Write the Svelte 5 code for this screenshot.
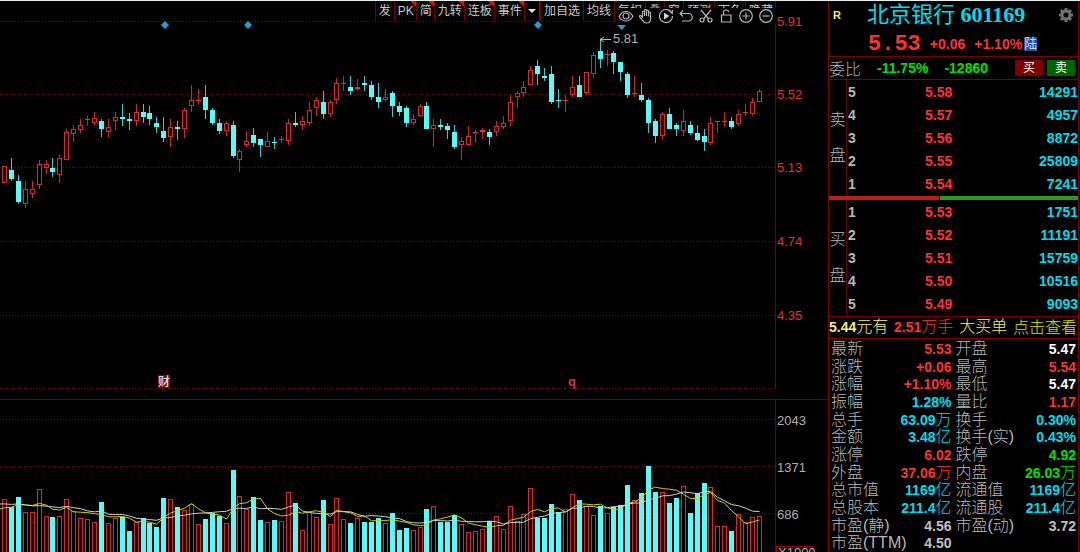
<script lang="ts">
  // up/down, high, body top, body bottom, low, volume top
  type Bar = [string, number, number, number, number, number];

  const bars: Bar[] = [
    ['u', 166, 166, 183, 183, 499], ['d', 158, 170, 179, 181, 507], ['d', 175, 181, 202, 204, 497],
    ['u', 181, 189, 204, 208, 512], ['u', 181, 189, 194, 198, 512], ['u', 160, 164, 185, 189, 489],
    ['u', 160, 164, 168, 174, 516], ['d', 158, 168, 172, 177, 517], ['u', 155, 158, 175, 183, 516],
    ['u', 129, 132, 160, 160, 499], ['u', 125, 129, 134, 142, 511], ['u', 119, 125, 130, 133, 518],
    ['u', 116, 119, 120, 126, 519], ['u', 112, 118, 123, 125, 522], ['d', 119, 121, 129, 137, 502],
    ['u', 119, 127, 132, 137, 523], ['u', 112, 117, 121, 130, 518], ['d', 104, 117, 119, 126, 517],
    ['d', 113, 119, 121, 130, 531], ['u', 104, 112, 121, 126, 522], ['d', 104, 112, 117, 123, 518],
    ['d', 106, 113, 119, 125, 523], ['d', 117, 123, 127, 133, 527], ['d', 117, 131, 138, 142, 498],
    ['u', 119, 127, 137, 147, 499], ['d', 121, 127, 129, 140, 507], ['u', 108, 110, 129, 138, 510],
    ['u', 85, 100, 106, 112, 504], ['u', 89, 100, 101, 104, 524], ['d', 85, 97, 110, 119, 519],
    ['d', 108, 110, 123, 125, 513], ['d', 119, 123, 131, 134, 516], ['u', 121, 123, 131, 136, 523],
    ['d', 121, 125, 156, 158, 470], ['u', 149, 151, 160, 172, 496], ['u', 131, 141, 145, 147, 509],
    ['d', 128, 135, 143, 147, 497], ['d', 139, 139, 145, 157, 520], ['u', 132, 141, 147, 147, 522],
    ['d', 137, 142, 143, 149, 520], ['u', 136, 139, 140, 143, 521], ['u', 119, 123, 141, 145, 492],
    ['d', 112, 123, 125, 127, 503], ['u', 116, 121, 125, 130, 530], ['u', 102, 110, 123, 125, 512],
    ['u', 97, 100, 108, 116, 517], ['d', 91, 102, 114, 119, 500], ['u', 100, 102, 114, 117, 524],
    ['u', 78, 83, 100, 104, 498], ['u', 76, 83, 84, 91, 519], ['d', 76, 87, 91, 95, 523],
    ['u', 79, 87, 89, 91, 518], ['d', 76, 83, 85, 91, 522], ['d', 81, 85, 97, 100, 522],
    ['d', 83, 97, 102, 108, 518], ['u', 89, 97, 100, 102, 523], ['d', 91, 93, 106, 117, 513],
    ['d', 102, 106, 112, 116, 530], ['d', 106, 108, 123, 127, 528], ['u', 114, 119, 123, 125, 530],
    ['u', 104, 106, 116, 117, 527], ['d', 102, 106, 129, 129, 509], ['u', 119, 125, 129, 147, 506],
    ['d', 119, 125, 127, 130, 522], ['d', 123, 126, 130, 139, 522], ['d', 125, 132, 147, 149, 515],
    ['u', 137, 141, 145, 160, 524], ['u', 126, 136, 145, 145, 532], ['u', 130, 132, 133, 143, 531],
    ['u', 128, 130, 132, 139, 529], ['d', 129, 132, 137, 145, 521], ['u', 121, 126, 132, 136, 516],
    ['u', 116, 123, 127, 129, 529], ['u', 95, 102, 121, 126, 506], ['u', 91, 93, 97, 108, 521],
    ['u', 81, 87, 93, 97, 514], ['u', 66, 70, 85, 85, 488], ['d', 60, 66, 74, 85, 518],
    ['d', 68, 76, 78, 81, 518], ['d', 66, 74, 102, 104, 504], ['d', 89, 100, 101, 108, 512],
    ['u', 95, 100, 101, 112, 509], ['u', 76, 87, 95, 97, 494], ['d', 76, 85, 97, 97, 500],
    ['u', 72, 72, 93, 95, 506], ['u', 52, 55, 74, 78, 515], ['d', 39, 51, 59, 68, 506],
    ['u', 50, 54, 55, 66, 513], ['d', 51, 53, 62, 74, 507], ['d', 62, 62, 72, 81, 505],
    ['d', 72, 74, 95, 98, 485], ['u', 76, 93, 94, 97, 500], ['d', 83, 95, 100, 102, 493],
    ['d', 98, 100, 123, 133, 466], ['d', 119, 121, 136, 143, 492], ['u', 112, 114, 136, 140, 492],
    ['d', 108, 114, 129, 129, 503], ['d', 123, 125, 129, 136, 498], ['u', 110, 121, 131, 136, 486],
    ['d', 121, 125, 133, 135, 513], ['d', 125, 133, 140, 141, 493], ['d', 129, 136, 142, 151, 483],
    ['u', 117, 123, 143, 145, 487], ['u', 121, 121, 122, 133, 526], ['u', 112, 121, 122, 127, 526],
    ['d', 117, 121, 127, 129, 531], ['u', 110, 114, 124, 126, 514], ['u', 104, 112, 113, 116, 522],
    ['u', 98, 102, 114, 116, 517], ['u', 89, 91, 102, 102, 516]
  ];

  // volumes just left of the visible window, needed by the averages
  const earlier = [502, 502, 502, 502, 492, 510, 510, 510, 510];

  const candles = bars.map(([dir, high, top, bottom, low, vol], i) => ({
    up: dir === 'u',
    x: Math.round(4 + i * 6.926),
    high,
    top,
    bottom,
    low,
    vol
  }));

  function average(n: number) {
    const all = [...earlier, ...bars.map((b) => b[5])];
    return candles
      .map((c, i) => {
        const end = i + earlier.length + 1;
        const sum = all.slice(end - n, end).reduce((a, b) => a + b, 0);
        return `${c.x + 0.5},${(sum / n).toFixed(1)}`;
      })
      .join(' ');
  }

  const ma5 = '0,509 ' + average(5);
  const ma10 = '0,504 ' + average(10);

  const priceAxis = [
    { y: 21, text: '5.91' },
    { y: 94, text: '5.52' },
    { y: 167, text: '5.13' },
    { y: 241, text: '4.74' },
    { y: 315, text: '4.35' },
    { y: 388, text: '' }
  ];
  const volumeAxis = [
    { y: 420, text: '2043' },
    { y: 467, text: '1371' },
    { y: 514, text: '686' }
  ];

  const tools = [
    { text: '发' },
    { text: 'PK', hot: true },
    { text: '简', hot: true },
    { text: '九转', hot: true },
    { text: '连板', hot: true },
    { text: '事件', hot: true },
    { text: '', more: true },
    { text: '加自选' },
    { text: '均线' },
    { text: '复权' },
    { text: '叠' },
    { text: '窗' },
    { text: '预测' },
    { text: '下色' },
    { text: '隐藏' }
  ];

  const asks = [
    ['5', '5.58', '14291'],
    ['4', '5.57', '4957'],
    ['3', '5.56', '8872'],
    ['2', '5.55', '25809'],
    ['1', '5.54', '7241']
  ];
  const bids = [
    ['1', '5.53', '1751'],
    ['2', '5.52', '11191'],
    ['3', '5.51', '15759'],
    ['4', '5.50', '10516'],
    ['5', '5.49', '9093']
  ];
  const book = [
    { side: ['卖', '盘'], rows: asks },
    { side: ['买', '盘'], rows: bids }
  ];

  // label, number, unit, colour
  const stats = [
    [['最新', '5.53', '', 'red'], ['开盘', '5.47', '', 'white']],
    [['涨跌', '+0.06', '', 'red'], ['最高', '5.54', '', 'red']],
    [['涨幅', '+1.10%', '', 'red'], ['最低', '5.47', '', 'white']],
    [['振幅', '1.28%', '', 'cyan'], ['量比', '1.17', '', 'red']],
    [['总手', '63.09', '万', 'cyan'], ['换手', '0.30%', '', 'cyan']],
    [['金额', '3.48', '亿', 'cyan'], ['换手(实)', '0.43%', '', 'cyan']],
    [['涨停', '6.02', '', 'red'], ['跌停', '4.92', '', 'green']],
    [['外盘', '37.06', '万', 'red'], ['内盘', '26.03', '万', 'green']],
    [['总市值', '1169', '亿', 'cyan'], ['流通值', '1169', '亿', 'cyan']],
    [['总股本', '211.4', '亿', 'cyan'], ['流通股', '211.4', '亿', 'cyan']],
    [['市盈(静)', '4.56', '', 'gray'], ['市盈(动)', '3.72', '', 'gray']],
    [['市盈(TTM)', '4.50', '', 'gray']]
  ];
</script>

<main class="app">
  <section class="chart">
    <nav class="toolbar">
      {#each tools as tool}
        <button class="tool" class:hot={tool.hot} class:more={tool.more} type="button" aria-label={tool.more ? '更多' : undefined}>
          {#if tool.more}
            <span class="caret"></span>
          {:else}
            {tool.text}
          {/if}
        </button>
      {/each}
    </nav>

    <div class="icons">
      <button type="button" aria-label="显示">
        <svg viewBox="0 0 16 16"><path d="M1 8.500C3 5 5.500 3.500 8 3.500s5 1.500 7 5c-2 3-4.500 4.500-7 4.500S3 11.500 1 8.500z" /><circle cx="8" cy="8" r="3" /></svg>
      </button>
      <button type="button" aria-label="拖动">
        <svg viewBox="0 0 16 16"><path d="M4.500 10V4q0-1 1-1t1 1v4V2.500q0-1 1-1t1 1V8V3q0-1 1-1t1 1v5.500V5q0-1 1-1t1 1v6q0 4-3.500 4H8q-2 0-3-2L2 9.500q-1-1.500 0-2t2.500 2.500" /></svg>
      </button>
      <button type="button" aria-label="播放">
        <svg viewBox="0 0 16 16"><path d="M14 5.500A6.500 6.500 0 1 0 14.500 8M11 2.500l3.200 3L14.500 2" /><path class="solid" d="M6 4.500v7l5.500-3.500z" /></svg>
      </button>
      <button type="button" aria-label="撤销">
        <svg viewBox="0 0 16 16"><path d="M5 2.500L2 5.500l3 3M2 5.500h8.500a3.500 3.500 0 0 1 0 7.500H4" /></svg>
      </button>
      <button type="button" aria-label="剪切">
        <svg viewBox="0 0 16 16"><path d="M3 2l7.500 9M13 2L5.500 11" /><circle cx="4" cy="12" r="2" /><circle cx="12" cy="12" r="2" /></svg>
      </button>
      <button type="button" aria-label="解锁">
        <svg viewBox="0 0 16 16"><path d="M3.500 7h9.500v7H3.500zM5.500 7V4.500a2.700 2.700 0 0 1 5.300-.5" /></svg>
      </button>
      <button type="button" aria-label="放大">
        <svg viewBox="0 0 16 16"><circle cx="8" cy="8" r="6.300" /><path d="M4.500 8h7M8 4.500v7" /></svg>
      </button>
      <button type="button" aria-label="缩小">
        <svg viewBox="0 0 16 16"><circle cx="8" cy="8" r="6.300" /><path d="M4.500 8h7" /></svg>
      </button>
    </div>

    <svg class="pane price" viewBox="0 21 828 378">
      {#each priceAxis as tick}
        <line class="grid" x1="0" x2="776" y1={tick.y + 0.5} y2={tick.y + 0.5} />
        <text class="tick" x="777" y={tick.y + 5}>{tick.text}</text>
      {/each}
      <line class="frame" x1="775.500" x2="775.500" y1="1" y2="389" />

      {#each candles as c}
        {#if c.up}
          <path class="wick up" d="M{c.x + 0.5} {c.high}V{c.top}M{c.x + 0.5} {c.bottom}V{c.low}" />
          {#if c.bottom - c.top < 3}
            <rect class="fill-up" x={c.x - 2} y={c.top} width="5" height={c.bottom - c.top} />
          {:else}
            <rect class="hollow" x={c.x - 1.5} y={c.top + 0.5} width="4" height={c.bottom - c.top - 1} />
          {/if}
        {:else}
          <path class="wick down" d="M{c.x + 0.5} {c.high}V{c.low}" />
          <rect class="fill-down" x={c.x - 2} y={c.top} width="5" height={c.bottom - c.top} />
        {/if}
      {/each}

      <path class="marker" d="M165 21l4 4-4 4-4-4zM248 21l4 4-4 4-4-4zM538 21l4 4-4 4-4-4zM617 25h9l-4 5z" />
      <path class="arrow" d="M600 39.500h11M604 37l-4 2.500 4 2.500" />
      <text class="peak" x="613" y="43">5.81</text>

      <rect class="event" x="158" y="375" width="12" height="13" />
      <text class="event-text" x="158" y="386">财</text>
      <text class="quarter" x="568" y="386">q</text>
    </svg>

    <svg class="pane volume" viewBox="0 399 828 153">
      <line class="frame" x1="0" x2="828" y1="399.500" y2="399.500" />
      {#each volumeAxis as tick}
        <line class="grid" x1="0" x2="776" y1={tick.y - 0.5} y2={tick.y - 0.5} />
        <text class="tick vol" x="777" y={tick.y + 5}>{tick.text}</text>
      {/each}
      <line class="frame" x1="775.500" x2="775.500" y1="399" y2="552" />

      {#each candles as c}
        {#if c.up}
          <rect class="hollow" x={c.x - 1.5} y={c.vol + 0.5} width="4" height={560 - c.vol} />
        {:else}
          <rect class="fill-down" x={c.x - 2} y={c.vol} width="5" height={560 - c.vol} />
        {/if}
      {/each}
      <polyline class="ma5" points={ma5} />
      <polyline class="ma10" points={ma10} />

      <rect class="unit-box" x="776.500" y="546.500" width="36" height="14" />
      <text class="tick vol" x="778" y="557">X1000</text>
    </svg>
  </section>

  <aside class="quote">
    <header class="head">
      <div class="title">
        <span class="flag">R</span>
        <h1>北京银行 <b>601169</b></h1>
        <button class="gear" type="button" aria-label="设置">
          <svg viewBox="0 0 16 16">
            <circle cx="8" cy="8" r="4" />
            <path d="M8 1v3M8 12v3M1 8h3M12 8h3M3 3l2.200 2.200M10.800 10.800L13 13M13 3l-2.200 2.200M5.200 10.800L3 13" />
          </svg>
        </button>
      </div>
      <div class="last">
        <span class="price-now">5.53</span>
        <span>+0.06</span>
        <span>+1.10%</span>
        <span class="badge">陆</span>
      </div>
    </header>

    <div class="ratio">
      <span class="name">委比</span>
      <span>-11.75%</span>
      <span>-12860</span>
      <div class="trade">
        <button class="buy" type="button">买</button>
        <button class="sell" type="button">卖</button>
      </div>
    </div>

    {#each book as part, i}
      {#if i === 1}
        <div class="balance"><i></i><i></i></div>
      {/if}
      <div class="book">
        <div class="side">
          {#each part.side as ch}<span>{ch}</span>{/each}
        </div>
        <table>
          <tbody>
            {#each part.rows as [level, price, size]}
              <tr>
                <td class="level">{level}</td>
                <td class="price-cell">{price}</td>
                <td class="size">{size}</td>
              </tr>
            {/each}
          </tbody>
        </table>
      </div>
    {/each}

    <div class="tip">
      <span class="pale"><b>5.44</b>元有</span>
      <span class="red"><b>2.51</b>万手</span>
      <span class="pale">大买单</span>
      <button type="button">点击查看</button>
    </div>

    <div class="stats">
      {#each stats as row}
        <dl>
          {#each row as [label, value, unit, color]}
            <div class="stat">
              <dt>{label}</dt>
              <dd class={color}><b>{value}</b>{unit}</dd>
            </div>
          {/each}
        </dl>
      {/each}
    </div>
  </aside>
</main>

<style>
  :global(body) {
    margin: 0;
    background: #000;
  }
  .app {
    display: grid;
    grid-template-columns: minmax(0, 1fr) 252px;
    height: 100vh;
    box-sizing: border-box;
    overflow: hidden;
    border-top: 1px solid #e8f0f0;
    background: #000;
    color: #b8b8b8;
    font-family: 'Liberation Sans', 'Noto Sans CJK SC', sans-serif;
    font-size: 14px;
  }
  button {
    border: none;
    padding: 0;
    margin: 0;
    background: transparent;
    color: inherit;
    font: inherit;
    cursor: pointer;
  }
  .chart {
    position: relative;
    min-width: 0;
  }
  .toolbar {
    display: flex;
    justify-content: flex-end;
    height: 20px;
    padding-right: 52px;
  }
  .tool {
    position: relative;
    padding: 0 3px;
    border-left: 1px solid #6e0000;
    color: #c8c8c8;
    font-size: 12px;
    line-height: 20px;
    white-space: nowrap;
  }
  .tool.hot {
    padding: 0 2px 0 3px;
  }
  .tool.hot::after {
    content: '';
    position: absolute;
    top: 0;
    right: 0;
    border-top: 6px solid #f00;
    border-left: 6px solid transparent;
  }
  .tool.more {
    display: grid;
    place-items: center;
    border-right: 1px solid #a00000;
  }
  .caret {
    border-top: 4px solid #e0e0e0;
    border-left: 4px solid transparent;
    border-right: 4px solid transparent;
  }
  .icons {
    position: absolute;
    z-index: 1;
    top: 7px;
    right: 52px;
    display: flex;
    background: #000;
  }
  .icons button {
    display: grid;
    place-items: center;
    width: 20px;
    height: 16px;
  }
  .icons svg {
    width: 16px;
    height: 16px;
    fill: none;
    stroke: #b4b4b4;
    stroke-width: 1.2;
  }
  .icons .solid {
    fill: #d0d0d0;
    stroke: none;
  }
  .pane {
    display: block;
    width: 100%;
    height: auto;
  }
  .price {
    overflow: visible;
  }
  .grid {
    stroke: #8c0000;
    stroke-dasharray: 1 2;
  }
  .frame {
    stroke: #780000;
  }
  .tick {
    fill: #e03030;
    font-size: 13px;
  }
  .tick.vol,
  .peak {
    fill: #b0b0b0;
    font-size: 13px;
  }
  .wick.up {
    stroke: #c82828;
  }
  .wick.down {
    stroke: #40c8c8;
  }
  .hollow {
    fill: #000;
    stroke: #d62a2a;
  }
  .fill-up {
    fill: #f03030;
  }
  .fill-down {
    fill: #54fcfc;
  }
  .marker {
    fill: #2a9ccc;
  }
  .arrow {
    fill: none;
    stroke: #b8b8b8;
  }
  .event {
    fill: #7c0808;
  }
  .event-text {
    fill: #fff;
    font-size: 12px;
  }
  .quarter {
    fill: #e03030;
    font-size: 13px;
    font-weight: bold;
  }
  .ma5,
  .ma10 {
    fill: none;
    stroke: #d0d000;
  }
  .ma10 {
    stroke: #d0d0d0;
  }
  .unit-box {
    fill: none;
    stroke: #a00000;
  }

  .quote {
    display: flex;
    flex-direction: column;
    min-height: 0;
    box-sizing: border-box;
    margin-right: 1px;
    border-left: 1px solid #780000;
    border-right: 1px solid #780000;
  }
  .head {
    height: 55px;
    border-bottom: 1px solid #780000;
  }
  .title {
    display: flex;
    align-items: center;
    height: 27px;
    padding: 0 4px;
  }
  .flag {
    width: 34px;
    color: #f0f060;
    font-size: 11px;
    font-weight: bold;
  }
  h1 {
    flex: 1;
    margin: 0;
    color: #00dcec;
    font-family: 'Liberation Serif', 'Noto Sans CJK SC', serif;
    font-size: 22px;
    font-weight: normal;
    line-height: 27px;
    white-space: nowrap;
  }
  .gear {
    width: 16px;
    height: 16px;
  }
  .gear svg {
    display: block;
    fill: none;
    stroke: #707070;
    stroke-width: 3;
  }
  .last {
    display: flex;
    align-items: center;
    gap: 9px;
    height: 32px;
    padding-left: 39px;
    color: #ff3232;
    font-weight: bold;
  }
  .price-now {
    font-family: 'Liberation Mono', monospace;
    font-size: 22px;
  }
  .last .badge {
    margin-left: -7px;
    background: #2850a0;
    color: #c0dcff;
    font-size: 13px;
    font-weight: normal;
    line-height: 14px;
  }
  .ratio {
    display: flex;
    align-items: center;
    gap: 16px;
    height: 22px;
    border-bottom: 1px solid #780000;
    color: #00e000;
    font-weight: bold;
  }
  .ratio .name {
    color: #b0b0b0;
    font-size: 16px;
    font-weight: 300;
  }
  .trade {
    display: flex;
    gap: 4px;
    margin-left: auto;
    padding-right: 3px;
  }
  .trade button {
    width: 28px;
    border-radius: 1px;
    color: #fff;
    font-size: 12px;
    font-weight: normal;
    line-height: 16px;
  }
  .buy {
    background: #800000;
  }
  .sell {
    background: #006400;
  }
  .book {
    display: grid;
    grid-template-columns: 18px 1fr;
    height: 116px;
  }
  .side {
    display: flex;
    flex-direction: column;
    align-items: center;
    justify-content: center;
    gap: 12px;
    border-right: 1px solid #600000;
    font-size: 16px;
    font-weight: 300;
    line-height: 24px;
  }
  table {
    width: 100%;
    height: 116px;
    border-collapse: collapse;
    font-weight: bold;
  }
  td {
    padding: 0;
  }
  .level {
    width: 77px;
    padding-left: 1px;
  }
  .price-cell {
    color: #ff3232;
  }
  .size {
    color: #00dcec;
    text-align: right;
  }
  .balance {
    display: grid;
    grid-template-columns: 110px 1fr;
    gap: 1px;
    height: 4px;
  }
  .balance i {
    background: #b82018;
  }
  .balance i:last-child {
    background: #349428;
  }
  .tip {
    display: flex;
    justify-content: space-between;
    height: 21px;
    padding-right: 1px;
    border-top: 1px solid #780000;
    border-bottom: 1px solid #780000;
    font-size: 16px;
    font-weight: 300;
    line-height: 20px;
    white-space: nowrap;
  }
  .tip b {
    font-size: 14px;
    font-weight: bold;
  }
  .tip button {
    color: #e0e000;
  }
  .pale {
    color: #f0f080;
  }
  .stats {
    flex: 1;
    min-height: 0;
    display: grid;
    grid-auto-rows: minmax(0, 1fr);
    padding: 1px 2px 0;
  }
  dl {
    display: grid;
    grid-template-columns: 1fr 1fr;
    column-gap: 4px;
    margin: 0;
  }
  .stat {
    display: flex;
    align-items: center;
    justify-content: space-between;
    font-size: 16px;
    font-weight: 300;
    line-height: 18px;
    white-space: nowrap;
  }
  dd {
    margin: 0;
  }
  dd b {
    font-size: 14px;
    font-weight: bold;
  }
  .red {
    color: #ff3232;
  }
  .white {
    color: #fff;
  }
  .cyan {
    color: #00dcec;
  }
  .green {
    color: #00e000;
  }
  .gray {
    color: #c0c0c0;
  }
</style>
